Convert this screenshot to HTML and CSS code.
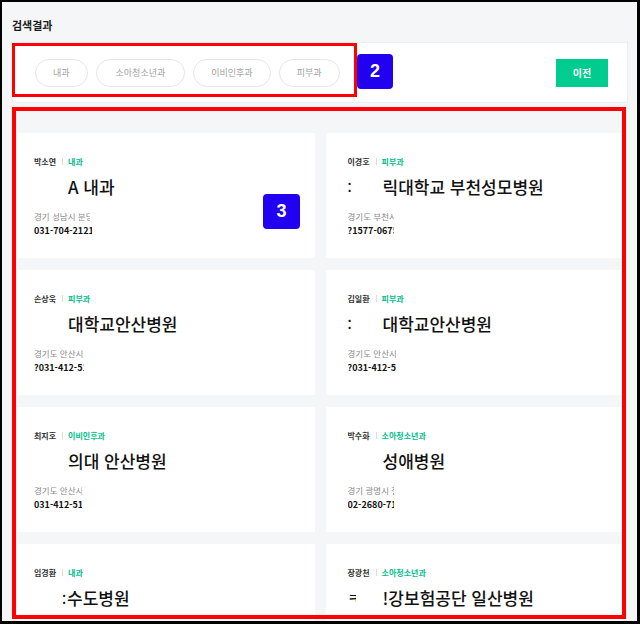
FILE: index.html
```html
<!DOCTYPE html>
<html lang="ko">
<head>
    <meta charset="UTF-8">
    <meta name="viewport" content="width=device-width,initial-scale=1.0">
    <title>검색결과</title>
    <link rel="stylesheet" href="styles.css">
</head>
<body>
<div class="frame">
    <h2 class="title">검색결과</h2>

    <!-- filter bar -->
    <div class="filter">
        <div class="chips">
            <button class="chip">내과</button>
            <button class="chip wide">소아청소년과</button>
            <button class="chip">이비인후과</button>
            <button class="chip">피부과</button>
        </div>
        <button class="prev">이전</button>
    </div>

    <!-- result cards -->
    <div class="results">
        <div class="card">
            <div class="meta"><span class="doc">박소연</span><span class="bar"></span><span class="dept">내과</span></div>
            <div class="hosp"><span class="lead"></span>A 내과</div>
            <div class="addr"><span class="cut w56">경기 성남시 분당구</span></div>
            <div class="tel"><span class="cut w58">031-704-2121</span></div>
        </div>
        <div class="card">
            <div class="meta"><span class="doc">이경호</span><span class="bar"></span><span class="dept">피부과</span></div>
            <div class="hosp"><span class="frag">:</span>릭대학교 부천성모병원</div>
            <div class="addr"><span class="cut w46">경기도 부천시 원미구</span></div>
            <div class="tel"><span class="cut w46">?1577-0675</span></div>
        </div>
        <div class="card">
            <div class="meta"><span class="doc">손상욱</span><span class="bar"></span><span class="dept">피부과</span></div>
            <div class="hosp"><span class="lead"></span>대학교안산병원</div>
            <div class="addr"><span class="cut w50">경기도 안산시 단원구</span></div>
            <div class="tel"><span class="cut w50">?031-412-5114</span></div>
        </div>
        <div class="card">
            <div class="meta"><span class="doc">김일환</span><span class="bar"></span><span class="dept">피부과</span></div>
            <div class="hosp"><span class="frag">:</span>대학교안산병원</div>
            <div class="addr"><span class="cut w48">경기도 안산시 단원구</span></div>
            <div class="tel"><span class="cut w48">?031-412-5114</span></div>
        </div>
        <div class="card">
            <div class="meta"><span class="doc">최지호</span><span class="bar"></span><span class="dept">이비인후과</span></div>
            <div class="hosp"><span class="lead"></span>의대 안산병원</div>
            <div class="addr"><span class="cut w48">경기도 안산시 단원구</span></div>
            <div class="tel"><span class="cut w48">031-412-5114</span></div>
        </div>
        <div class="card">
            <div class="meta"><span class="doc">박수화</span><span class="bar"></span><span class="dept">소아청소년과</span></div>
            <div class="hosp"><span class="frag"></span>성애병원</div>
            <div class="addr"><span class="cut w46">경기 광명시 철산동</span></div>
            <div class="tel"><span class="cut w46">02-2680-7114</span></div>
        </div>
        <div class="card">
            <div class="meta"><span class="doc">임경환</span><span class="bar"></span><span class="dept">내과</span></div>
            <div class="hosp"><span class="lead short">:</span>수도병원</div>
            <div class="addr"><span class="cut w50">경기도 성남시</span></div>
            <div class="tel"><span class="cut w50">031-725-6114</span></div>
        </div>
        <div class="card">
            <div class="meta"><span class="doc">장광천</span><span class="bar"></span><span class="dept">소아청소년과</span></div>
            <div class="hosp"><span class="frag"><span class="nub">ㅋ</span></span>!강보험공단 일산병원</div>
            <div class="addr"><span class="cut w46">경기도 고양시</span></div>
            <div class="tel"><span class="cut w46">031-900-0114</span></div>
        </div>
    </div>
</div>

<!-- annotation marks -->
<div class="mark mark-2"></div>
<div class="badge badge-2">2</div>
<div class="mark mark-3"></div>
<div class="badge badge-3">3</div>
</body>
</html>
```

FILE: styles.css
```css
* {
    box-sizing: border-box;
    margin: 0;
    padding: 0;
}

body {
    width: 640px;
    height: 624px;
    overflow: hidden;
    font-family: "Noto Sans CJK KR", "Noto Sans", sans-serif;
    color: #222;
}

.frame {
    width: 640px;
    height: 624px;
    overflow: hidden;
    background: #f4f6f8;
    border-style: solid;
    border-color: #000;
    border-width: 2px 3px 3px 2px;
    padding: 15px 9px 0 10px;
}

.title {
    font-size: 11px;
    font-weight: 700;
    line-height: 16px;
    color: #1c1c1c;
}

/* filter bar */
.filter {
    margin-top: 9px;
    height: 61px;
    background: #fff;
    border: 1px solid #eceff2;
    display: flex;
    align-items: center;
    justify-content: space-between;
    padding: 0 19px 0 22px;
}

.chips {
    display: flex;
    gap: 8px;
}

.chip {
    height: 28px;
    padding: 0 17px;
    border: 1px solid #e3e6ea;
    border-radius: 14px;
    background: #fff;
    color: #a3a3a3;
    font-family: inherit;
    font-size: 9px;
    line-height: 26px;
}

.chip.wide {
    padding: 0 19px;
}

.prev {
    width: 52px;
    height: 28px;
    border: none;
    background: #00cc90;
    color: #fff;
    font-family: inherit;
    font-size: 10px;
    font-weight: 700;
}

/* results */
.results {
    margin-top: 30px;
    padding: 0 5px;
    display: grid;
    grid-template-columns: 1fr 1fr;
    column-gap: 11px;
    row-gap: 12px;
}

.card {
    height: 125px;
    background: #fff;
    padding: 22px 10px 0 17px;
    overflow: hidden;
}

.card:nth-child(even) {
    padding-left: 22px;
}

.meta {
    display: flex;
    align-items: center;
    height: 12px;
    font-size: 8px;
    font-weight: 700;
}

.doc {
    color: #333;
}

.bar {
    width: 1px;
    height: 7px;
    background: #dcdcdc;
    margin: 0 5px 0 6px;
}

.dept {
    color: #00c08a;
}

.hosp {
    margin-top: 8px;
    height: 24px;
    line-height: 24px;
    font-size: 17px;
    font-weight: 500;
    color: #111;
    white-space: nowrap;
}

.lead {
    display: inline-block;
    width: 34px;
}

.lead.short {
    width: 33px;
    padding-left: 28px;
    font-size: 14px;
}

.frag {
    display: inline-block;
    width: 35px;
    font-size: 14px;
    vertical-align: top;
}

.nub {
    display: inline-block;
    width: 8px;
    overflow: hidden;
    font-size: 13px;
    vertical-align: top;
}

.addr {
    margin-top: 11px;
    height: 12px;
    line-height: 12px;
    font-size: 8.5px;
    color: #8a8a8a;
}

.tel {
    margin-top: 2px;
    height: 14px;
    line-height: 14px;
    font-size: 9px;
    font-weight: 700;
    color: #111;
}

.cut {
    display: inline-block;
    overflow: hidden;
    white-space: nowrap;
    vertical-align: top;
}

.w58 { width: 58px; }
.w56 { width: 56px; }
.w50 { width: 50px; }
.w48 { width: 48px; }
.w46 { width: 46px; }

/* annotation marks */
.mark {
    position: absolute;
    border: 3px solid #ff0000;
}

.mark-2 {
    left: 12px;
    top: 43px;
    width: 345px;
    height: 54px;
}

.mark-3 {
    left: 12px;
    top: 107px;
    width: 614px;
    height: 512px;
    border-width: 4px;
}

.badge {
    position: absolute;
    width: 36px;
    height: 35px;
    border-radius: 4px;
    background: #2200f0;
    color: #fff;
    font-family: "Liberation Sans", Arial, sans-serif;
    font-size: 18px;
    font-weight: 700;
    line-height: 35px;
    text-align: center;
}

.badge-2 {
    left: 357px;
    top: 54px;
}

.badge-3 {
    left: 263px;
    top: 194px;
    width: 37px;
}
```
